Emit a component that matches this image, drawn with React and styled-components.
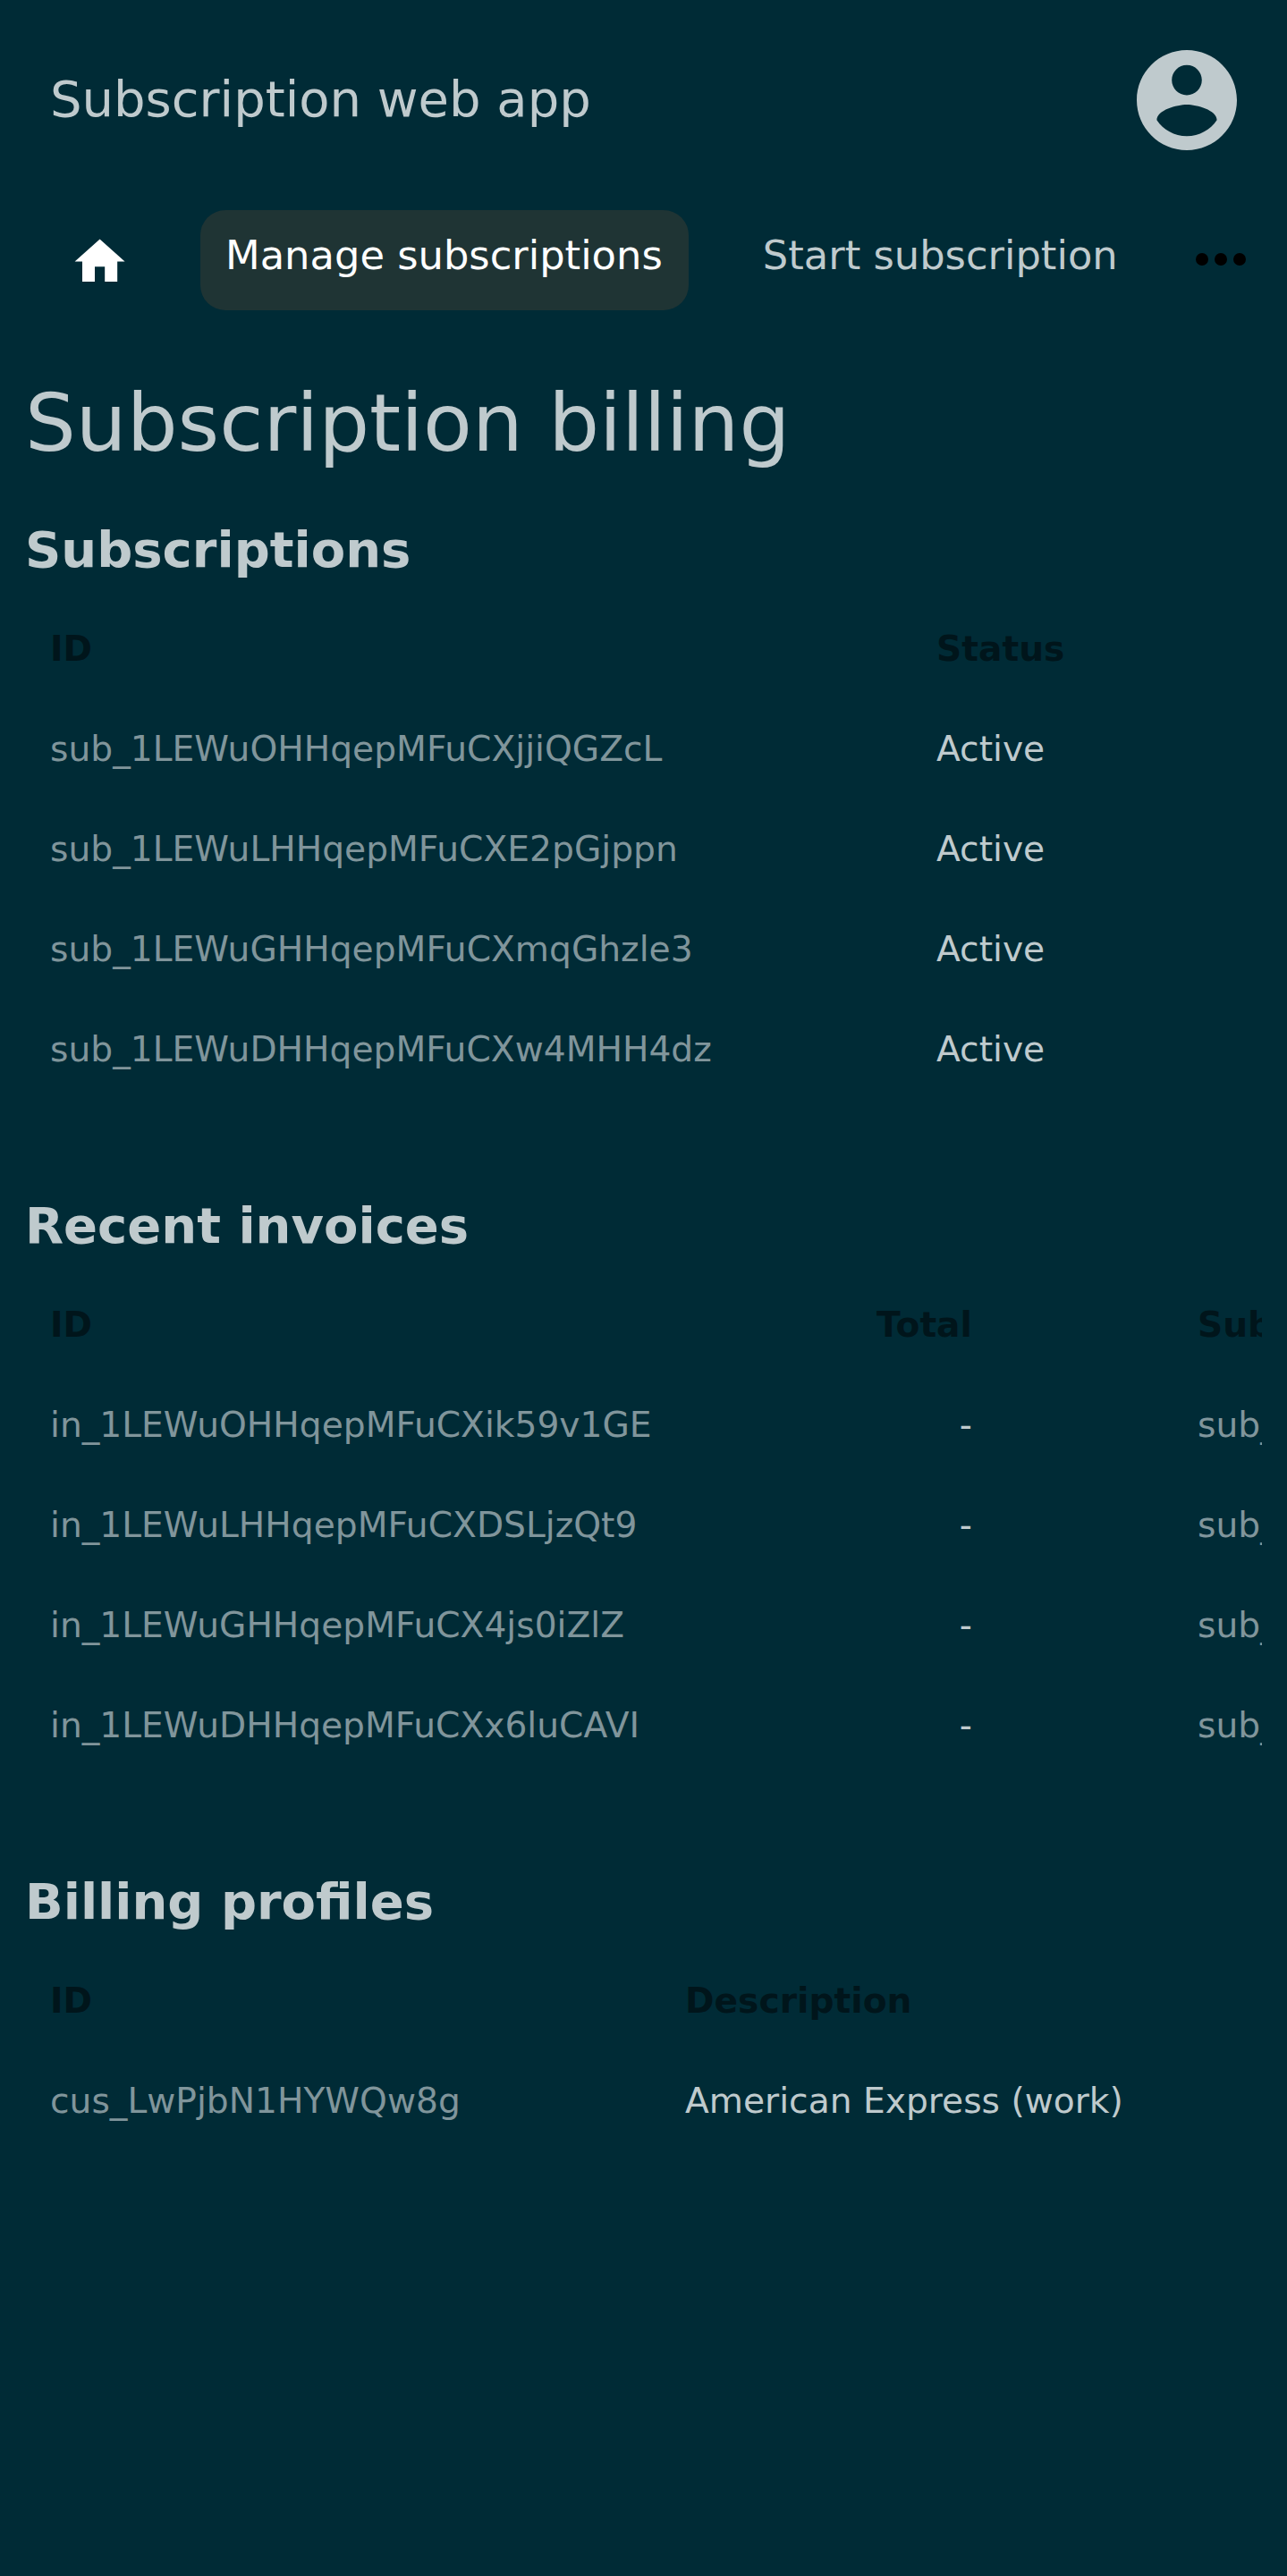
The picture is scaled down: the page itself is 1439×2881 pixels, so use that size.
import React from "react";
import styled, { createGlobalStyle } from "styled-components";

const GlobalStyle = createGlobalStyle`
  * { box-sizing: border-box; }
  body {
    margin: 0;
    background: #002b36;
    color: #bfcacd;
    font-family: "DejaVu Sans", sans-serif;
  }
`;

const Page = styled.div`
  width: 1439px;
  min-height: 2881px;
  overflow: hidden;
  background: #002b36;
`;

const Header = styled.header`
  display: flex;
  justify-content: space-between;
  align-items: flex-start;
  height: 234.6px;
  padding: 56px 56px 0;
`;

const AppTitle = styled.div`
  font-size: 56px;
  line-height: 109px;
`;

const AccountIcon = styled.svg`
  width: 112px;
  height: 112px;
  fill: #bfcacd;
`;

const Nav = styled.nav`
  display: flex;
  justify-content: space-between;
  align-items: flex-start;
  height: 112px;
  padding: 0 32px 0 56px;
`;

const NavLinks = styled.div`
  display: flex;
  align-items: flex-start;
  gap: 55px;
`;

const NavItem = styled.a`
  flex: none;
  height: 112px;
  padding: 0 29px 0 28px;
  border-radius: 28px;
  font-size: 44.8px;
  line-height: 101px;
  white-space: nowrap;
  color: ${(p) => (p.$active ? "#ffffff" : "#bfcacd")};
  background: ${(p) => (p.$active ? "#1f3434" : "transparent")};
`;

const HomeLink = styled.a`
  flex: none;
  display: flex;
  justify-content: center;
  width: 112px;
  margin-right: 1px;
  padding-top: 24px;
`;

const HomeIcon = styled.svg`
  width: 67.2px;
  height: 67.2px;
  fill: #ffffff;
`;

const MoreButton = styled.div`
  flex: none;
  display: flex;
  margin-left: -20px;
  padding-top: 13.8px;
`;

const MoreIcon = styled.svg`
  width: 84px;
  height: 84px;
  fill: #000000;
`;

const Main = styled.main`
  padding: 74.4px 28px 0;
`;

const PageTitle = styled.h1`
  margin: 0 0 57px;
  font-size: 89.6px;
  font-weight: 400;
  line-height: 104px;
`;

const Section = styled.section`
  margin-bottom: 108px;
`;

const SectionTitle = styled.h2`
  margin: 0 0 23px;
  font-size: 56px;
  font-weight: 700;
  line-height: 65px;
`;

const TableScroll = styled.div`
  overflow: hidden;
`;

const Row = styled.div`
  display: grid;
  grid-template-columns: ${(p) => p.$columns};
  height: 112px;
`;

const Cell = styled.div`
  padding: 0 28px;
  font-size: 39.2px;
  line-height: 111px;
  white-space: nowrap;
  text-align: ${(p) => (p.$right ? "right" : "left")};
`;

const HeadCell = styled(Cell)`
  font-weight: 700;
  color: #00151b;
`;

const IdLink = styled.a`
  color: #80959b;
`;

const sections = [
  {
    title: "Subscriptions",
    columns: "991px 392px",
    fields: [{ label: "ID", link: true }, { label: "Status" }],
    rows: [
      ["sub_1LEWuOHHqepMFuCXjjiQGZcL", "Active"],
      ["sub_1LEWuLHHqepMFuCXE2pGjppn", "Active"],
      ["sub_1LEWuGHHqepMFuCXmqGhzle3", "Active"],
      ["sub_1LEWuDHHqepMFuCXw4MHH4dz", "Active"],
    ],
  },
  {
    title: "Recent invoices",
    columns: "868px 219px 196px 840px",
    fields: [
      { label: "ID", link: true },
      { label: "Total", right: true },
      { label: "" },
      { label: "Subscription", link: true },
    ],
    rows: [
      ["in_1LEWuOHHqepMFuCXik59v1GE", "-", "", "sub_1LEWuOHHqepMFuCXjjiQGZcL"],
      ["in_1LEWuLHHqepMFuCXDSLjzQt9", "-", "", "sub_1LEWuLHHqepMFuCXE2pGjppn"],
      ["in_1LEWuGHHqepMFuCX4js0iZlZ", "-", "", "sub_1LEWuGHHqepMFuCXmqGhzle3"],
      ["in_1LEWuDHHqepMFuCXx6luCAVI", "-", "", "sub_1LEWuDHHqepMFuCXw4MHH4dz"],
    ],
  },
  {
    title: "Billing profiles",
    columns: "710px 673px",
    fields: [{ label: "ID", link: true }, { label: "Description" }],
    rows: [["cus_LwPjbN1HYWQw8g", "American Express (work)"]],
  },
];

function DataTable({ columns, fields, rows }) {
  return (
    <TableScroll>
      <Row $columns={columns}>
        {fields.map((f, i) => (
          <HeadCell key={i} $right={f.right}>{f.label}</HeadCell>
        ))}
      </Row>
      {rows.map((row) => (
        <Row key={row[0]} $columns={columns}>
          {row.map((value, i) => (
            <Cell key={i} $right={fields[i].right}>
              {fields[i].link ? <IdLink>{value}</IdLink> : value}
            </Cell>
          ))}
        </Row>
      ))}
    </TableScroll>
  );
}

export default function App() {
  return (
    <>
      <GlobalStyle />
      <Page>
        <Header>
          <AppTitle>Subscription web app</AppTitle>
          <AccountIcon viewBox="2 2 20 20">
            <path d="M12 2C6.48 2 2 6.48 2 12s4.48 10 10 10 10-4.48 10-10S17.52 2 12 2zm0 3c1.66 0 3 1.34 3 3s-1.34 3-3 3-3-1.34-3-3 1.34-3 3-3zm0 14.2c-2.5 0-4.71-1.28-6-3.22.03-1.99 4-3.08 6-3.08 1.99 0 5.97 1.09 6 3.08-1.29 1.94-3.5 3.22-6 3.22z" />
          </AccountIcon>
        </Header>
        <Nav>
          <NavLinks>
            <HomeLink>
              <HomeIcon viewBox="0 0 24 24">
                <path d="M10 20v-6h4v6h5v-8h3L12 3 2 12h3v8z" />
              </HomeIcon>
            </HomeLink>
            <NavItem $active>Manage subscriptions</NavItem>
            <NavItem>Start subscription</NavItem>
          </NavLinks>
          <MoreButton>
            <MoreIcon viewBox="0 0 24 24">
              <circle cx="6" cy="12" r="2" />
              <circle cx="12" cy="12" r="2" />
              <circle cx="18" cy="12" r="2" />
            </MoreIcon>
          </MoreButton>
        </Nav>
        <Main>
          <PageTitle>Subscription billing</PageTitle>
          {sections.map((s) => (
            <Section key={s.title}>
              <SectionTitle>{s.title}</SectionTitle>
              <DataTable {...s} />
            </Section>
          ))}
        </Main>
      </Page>
    </>
  );
}
